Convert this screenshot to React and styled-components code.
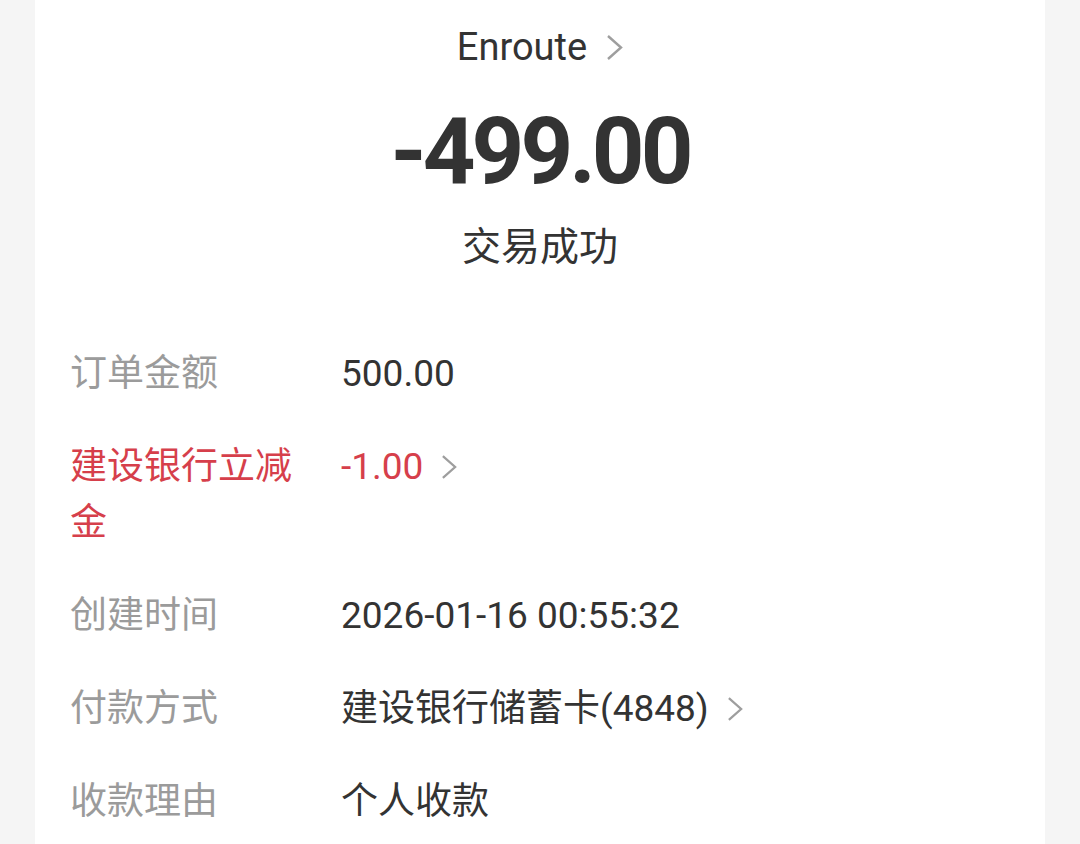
import React from "react";
import styled, { createGlobalStyle } from "styled-components";

const GlobalStyle = createGlobalStyle`
  html, body {
    margin: 0;
    padding: 0;
    background: #f5f5f5;
  }
  body {
    font-family: Roboto, "Noto Sans CJK SC", sans-serif;
  }
`;

const Chevron = ({ w = 17, h = 27 }) => (
  <ChevronSvg width={w} height={h} viewBox="0 0 17 27">
    <polyline points="2,2 15,13.5 2,25" fill="none" stroke="#9e9e9e" strokeWidth="2.4" />
  </ChevronSvg>
);

const rows = [
  { label: "订单金额", value: "500.00" },
  { label: "建设银行立减金", value: "-1.00", red: true, link: true },
  { label: "创建时间", value: "2026-01-16 00:55:32" },
  { label: "付款方式", value: "建设银行储蓄卡(4848)", link: true },
  { label: "收款理由", value: "个人收款" },
];

const App = () => {
  return (
    <Page>
      <GlobalStyle />
      <Card>
        <Header>
          <Merchant>
            Enroute
            <Chevron />
          </Merchant>
          <Amount>-499.00</Amount>
          <Status>交易成功</Status>
        </Header>
        <Details>
          {rows.map((r) => (
            <Row key={r.label}>
              <Label $red={r.red}>{r.label}</Label>
              <Value $red={r.red}>
                {r.value}
                {r.link && <Chevron w={16} h={26} />}
              </Value>
            </Row>
          ))}
        </Details>
      </Card>
    </Page>
  );
};

export default App;

const Page = styled.div`
  width: 1080px;
  height: 844px;
  overflow: hidden;
  display: flex;
  justify-content: center;
  background: #f5f5f5;
`;

const Card = styled.div`
  width: 1010px;
  background: #ffffff;
  padding: 19px 35px 0;
  box-sizing: border-box;
`;

const Header = styled.div`
  display: flex;
  flex-direction: column;
  align-items: center;
`;

const Merchant = styled.div`
  display: flex;
  align-items: center;
  gap: 19px;
  font-size: 38px;
  line-height: 56px;
  color: #333333;
`;

const ChevronSvg = styled.svg`
  display: block;
  flex-shrink: 0;
`;

const Amount = styled.div`
  margin-top: 22px;
  font-size: 92px;
  font-weight: 700;
  line-height: 110px;
  letter-spacing: -4px;
  color: #333333;
`;

const Status = styled.div`
  margin-top: 8px;
  font-size: 39px;
  line-height: 56px;
  color: #333333;
  font-family: "Noto Sans CJK SC", sans-serif;
`;

const Details = styled.div`
  margin-top: 75px;
  display: flex;
  flex-direction: column;
  gap: 37px;
`;

const Row = styled.div`
  display: flex;
  align-items: flex-start;
`;

const Label = styled.div`
  width: 240px;
  margin-right: 31px;
  flex-shrink: 0;
  font-size: 37px;
  line-height: 56px;
  color: ${(p) => (p.$red ? "#d63f4b" : "#9b9b9b")};
`;

const Value = styled.div`
  display: flex;
  align-items: center;
  gap: 18px;
  font-size: 37px;
  line-height: 56px;
  color: ${(p) => (p.$red ? "#d63f4b" : "#333333")};
`;
